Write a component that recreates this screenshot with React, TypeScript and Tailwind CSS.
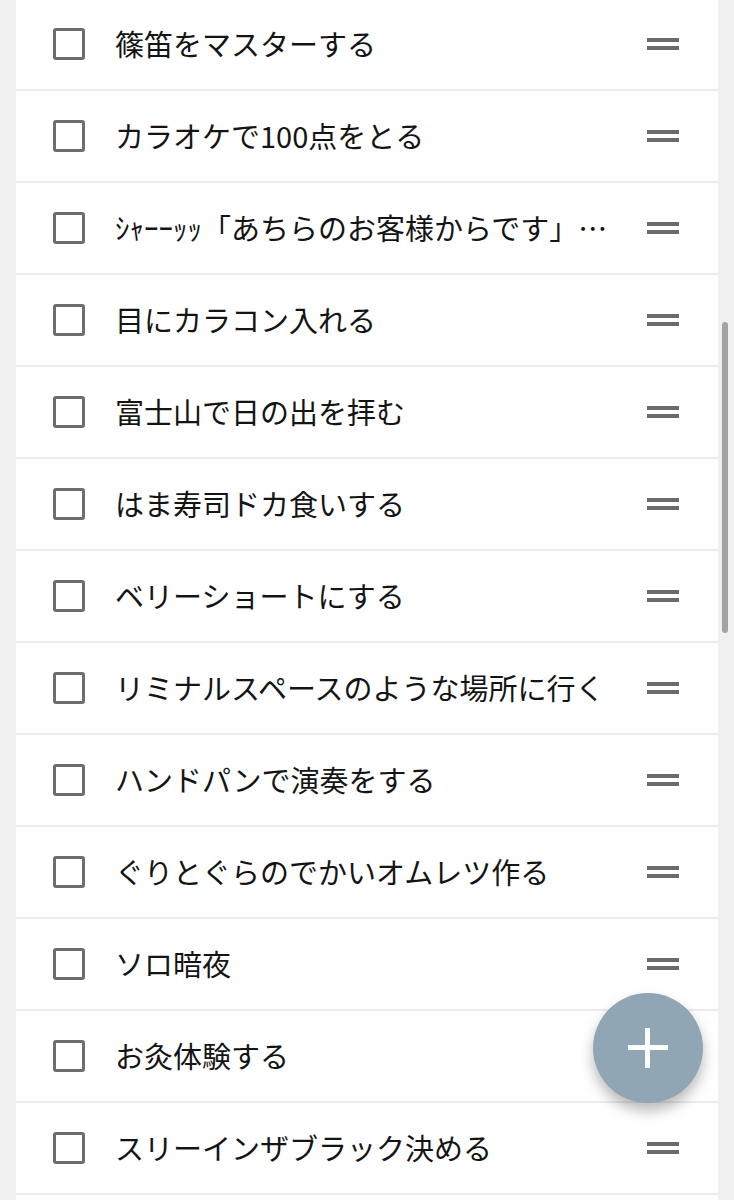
import React from "react";

const items = [
  "篠笛をマスターする",
  "カラオケで100点をとる",
  "ｼｬｰｰｯｯ「あちらのお客様からです」…",
  "目にカラコン入れる",
  "富士山で日の出を拝む",
  "はま寿司ドカ食いする",
  "ベリーショートにする",
  "リミナルスペースのような場所に行く",
  "ハンドパンで演奏をする",
  "ぐりとぐらのでかいオムレツ作る",
  "ソロ暗夜",
  "お灸体験する",
  "スリーインザブラック決める",
  "",
];

function Row({ text }: { text: string }) {
  return (
    <div className="flex h-[90px] shrink-0 items-center bg-white">
      <div className="ml-[37px] h-[32px] w-[32px] shrink-0 rounded-[3px] border-[3px] border-[#6d6d6d]" />
      <div className="ml-[30px] min-w-0 flex-1 whitespace-nowrap pb-[3px] text-[29px] leading-[40px] text-[#141414]">
        {text}
      </div>
      <div className="mr-[39px] flex w-[32px] shrink-0 flex-col gap-[4px]">
        <div className="h-[4px] w-full bg-[#6b6b6b]" />
        <div className="h-[4px] w-full bg-[#6b6b6b]" />
      </div>
    </div>
  );
}

export default function App() {
  return (
    <div
      className="relative h-[1200px] w-[734px] overflow-hidden bg-[#f0f0f0]"
      style={{ fontFamily: '"Noto Sans CJK JP", "Noto Sans", sans-serif' }}
    >
      <div className="ml-[16px] mt-[-1px] flex w-[702px] flex-col gap-[2px] bg-[#ececec]">
        {items.map((t, i) => (
          <Row key={i} text={t} />
        ))}
      </div>
      {/* scrollbar thumb */}
      <div className="absolute left-[722px] top-[322px] h-[311px] w-[6px] rounded-full bg-[#a3a3a3]" />
      {/* FAB */}
      <div className="absolute left-[593px] top-[993px] flex h-[110px] w-[110px] items-center justify-center rounded-full bg-[#91a6b4] shadow-[0_8px_14px_rgba(0,0,0,0.28)]">
        <div className="relative h-[40px] w-[40px]">
          <div className="absolute left-0 top-[17px] h-[5px] w-[40px] bg-white" />
          <div className="absolute left-[17px] top-0 h-[40px] w-[5px] bg-white" />
        </div>
      </div>
    </div>
  );
}
